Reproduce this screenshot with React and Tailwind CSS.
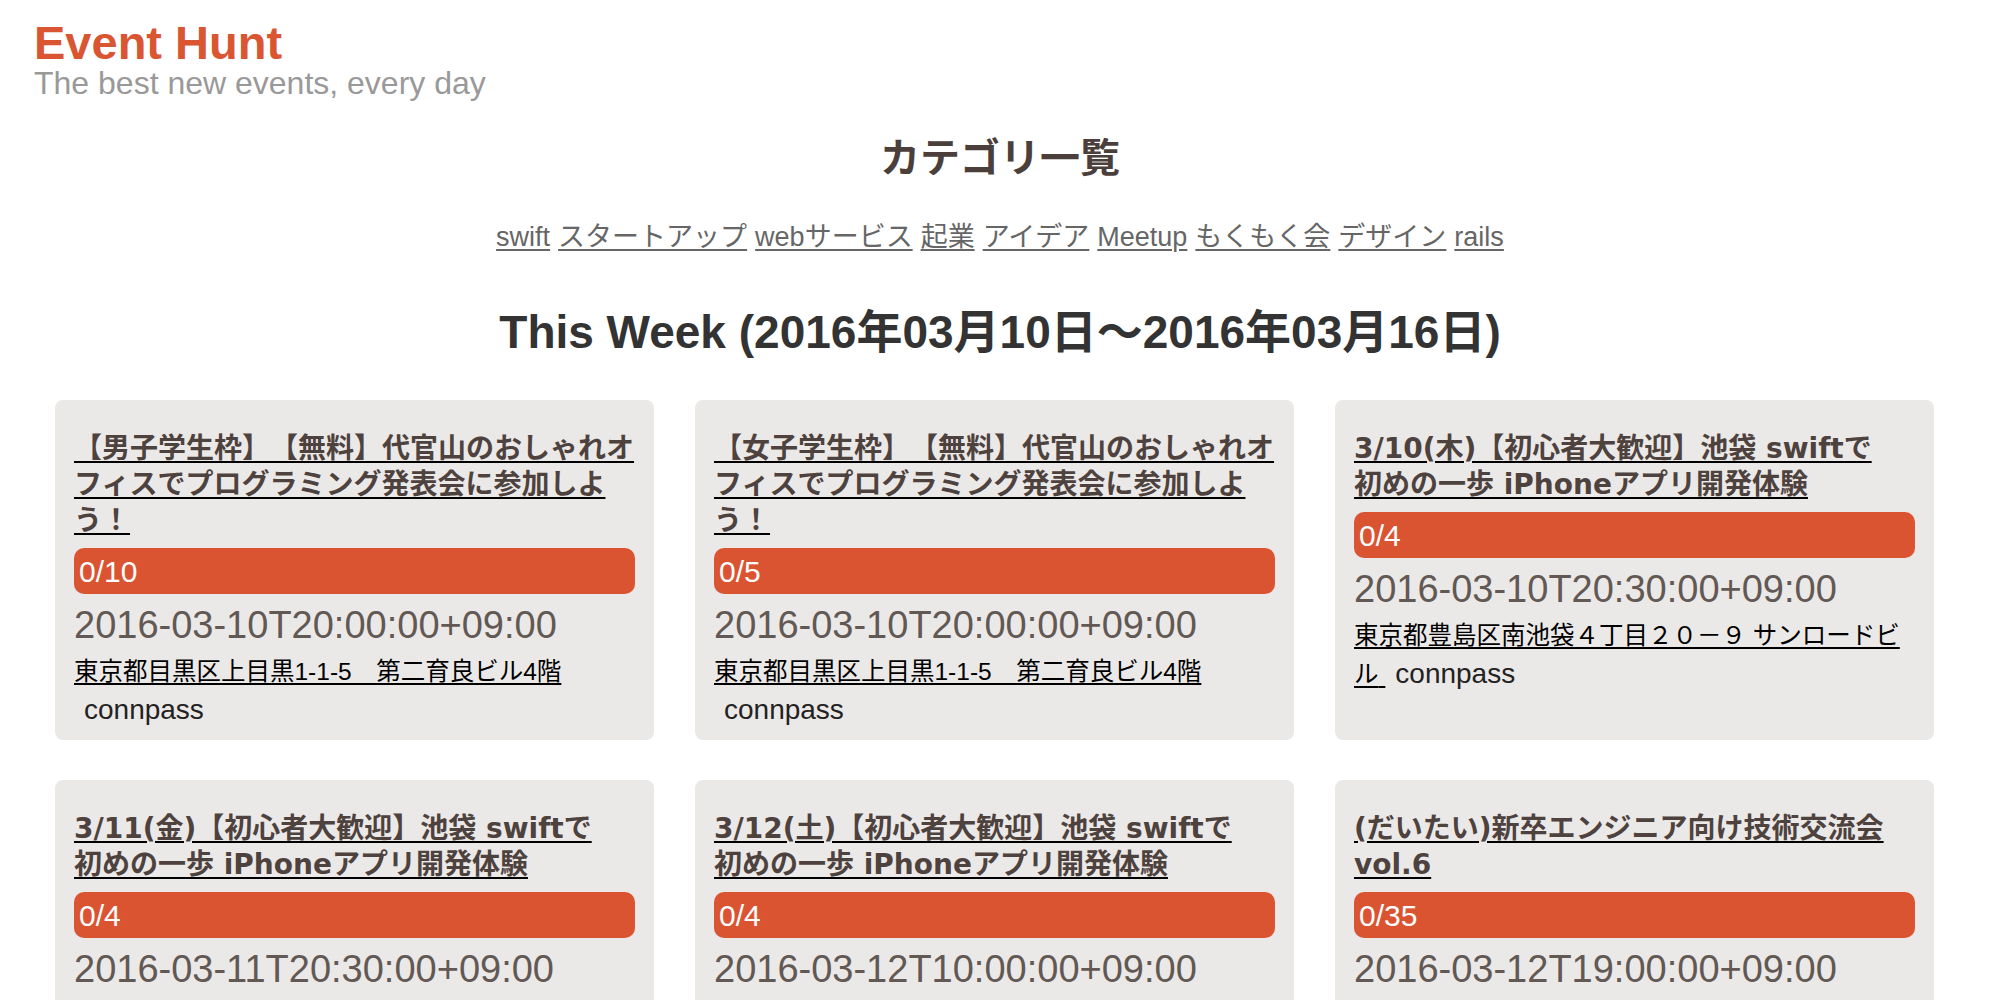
const categories = ["swift", "スタートアップ", "webサービス", "起業", "アイデア", "Meetup", "もくもく会", "デザイン", "rails"];

const meguro = "東京都目黒区上目黒1-1-5\u3000第二育良ビル4階";
const ikebukuro = "東京都豊島区南池袋４丁目２０－９ サンロードビル";

const events = [
  {
    title: "【男子学生枠】【無料】代官山のおしゃれオ\nフィスでプログラミング発表会に参加しよ\nう！",
    count: "0/10",
    date: "2016-03-10T20:00:00+09:00",
    venue: meguro,
  },
  {
    title: "【女子学生枠】【無料】代官山のおしゃれオ\nフィスでプログラミング発表会に参加しよ\nう！",
    count: "0/5",
    date: "2016-03-10T20:00:00+09:00",
    venue: meguro,
  },
  {
    title: "3/10(木)【初心者大歓迎】池袋 swiftで\n初めの一歩 iPhoneアプリ開発体験",
    count: "0/4",
    date: "2016-03-10T20:30:00+09:00",
    venue: ikebukuro,
  },
  {
    title: "3/11(金)【初心者大歓迎】池袋 swiftで\n初めの一歩 iPhoneアプリ開発体験",
    count: "0/4",
    date: "2016-03-11T20:30:00+09:00",
    venue: ikebukuro,
  },
  {
    title: "3/12(土)【初心者大歓迎】池袋 swiftで\n初めの一歩 iPhoneアプリ開発体験",
    count: "0/4",
    date: "2016-03-12T10:00:00+09:00",
    venue: ikebukuro,
  },
  {
    title: "(だいたい)新卒エンジニア向け技術交流会\nvol.6",
    count: "0/35",
    date: "2016-03-12T19:00:00+09:00",
    venue: "東京都渋谷区渋谷2-21-1",
  },
];

function EventCard({ ev }) {
  return (
    <div className="rounded-[8px] bg-[#ebe9e7] px-[19px] pt-[31px] pb-[11px]">
      <a className="block whitespace-pre-line font-['DejaVu_Sans','Noto_Sans_CJK_JP',sans-serif] text-[28px] font-bold leading-[36px] text-[#4e423e] underline decoration-black decoration-2 underline-offset-[3px]">
        {ev.title}
      </a>
      <div className="mt-[9px] flex h-[46px] items-center rounded-[10px] bg-[#db5431] pl-[5px] text-[30px] text-white">
        {ev.count}
      </div>
      <div className="mt-[8px] text-[38px] leading-[46px] text-[#625854]">{ev.date}</div>
      <p className="mt-[4px] text-[28px] leading-[38px] text-[#222]">
        <a className="text-[24.5px] text-black underline decoration-black decoration-2 underline-offset-[3px]">{ev.venue} </a>
        <span className="ml-[10px]">connpass</span>
      </p>
    </div>
  );
}

export default function App() {
  return (
    <div className="min-h-screen bg-white font-['Liberation_Sans','Noto_Sans_CJK_JP',sans-serif] [text-spacing-trim:space-all]">
      <header className="pl-[34px] pt-[18px]">
        <div className="text-[47px] font-bold leading-[50px] text-[#da5532]">Event Hunt</div>
        <div className="text-[32px] leading-[30px] text-[#999]">The best new events, every day</div>
      </header>

      <section className="text-center">
        <h2 className="mt-[36px] text-[40px] font-bold leading-[48px] text-[#4a3f3b]">カテゴリ一覧</h2>
        <div className="mt-[37px] flex justify-center gap-[8px] text-[27px] leading-[36px] text-[#666]">
          {categories.map((c) => (
            <a key={c} className="underline decoration-2 underline-offset-[3px]">
              {c}
            </a>
          ))}
        </div>
        <h2 className="mt-[50px] text-[46px] font-bold leading-[54px] text-[#333]">
          This Week (2016年03月10日～2016年03月16日)
        </h2>
      </section>

      <div className="mt-[41px] grid grid-cols-3 gap-x-[41px] gap-y-[40px] pl-[55px] pr-[66px] pb-[40px]">
        {events.map((ev, i) => (
          <EventCard key={i} ev={ev} />
        ))}
      </div>
    </div>
  );
}
